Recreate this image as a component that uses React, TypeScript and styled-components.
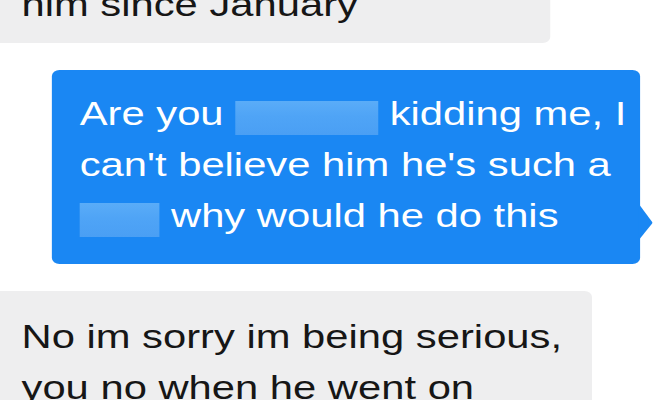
import React from 'react';
import styled, { createGlobalStyle, css } from 'styled-components';

// the reference screenshot is stretched sideways, so the thread is laid out
// at phone proportions and widened as a whole
const stretch = 1.265;

const GlobalStyle = createGlobalStyle`
  html, body {
    margin: 0;
    padding: 0;
    background: #ffffff;
    overflow: hidden;
  }
  body {
    font-family: "Liberation Sans", Arial, Helvetica, sans-serif;
  }
`;

const Screen = styled.div`
  width: ${670 / stretch}px;
  height: 400px;
  overflow: hidden;
  transform: scaleX(${stretch});
  transform-origin: 0 0;
`;

const Thread = styled.div`
  display: flex;
  flex-direction: column;
  align-items: flex-start;
  gap: 27px;
  margin-top: -41px;
`;

type Side = 'in' | 'out';

const Bubble = styled.div<{ $side: Side; $width: number; $offset: number }>`
  position: relative;
  box-sizing: border-box;
  width: ${p => p.$width}px;
  margin-left: ${p => p.$offset}px;
  border-radius: 6px;
  font-size: 33px;
  line-height: 51px;
  white-space: nowrap;

  ${p =>
    p.$side === 'in'
      ? css`
          background: #eeeeef;
          color: #161616;
          padding: 20px 0 13px 27px;
        `
      : css`
          background: #1a87f3;
          color: #ffffff;
          padding: 18px 0 23px 22px;

          &::after {
            content: '';
            position: absolute;
            right: -10px;
            bottom: 24px;
            width: 11px;
            height: 36px;
            background: #1a87f3;
            clip-path: polygon(0 0, 100% 52%, 0 100%);
          }
        `}
`;

const Line = styled.div`
  display: block;
`;

const Censor = styled.span<{ $width: number }>`
  display: inline-block;
  width: ${p => p.$width}px;
  height: 34px;
  vertical-align: -10px;
  background: linear-gradient(180deg, #5aacf8 0%, #4fa4f6 45%, #4a9ff4 100%);
`;

export default function App() {
  return (
    <>
      <GlobalStyle />
      <Screen>
        <Thread>
          <Bubble $side="in" $width={445} $offset={-10}>
            <Line>him since January</Line>
          </Bubble>

          <Bubble $side="out" $width={465} $offset={41}>
            <Line>
              Are you <Censor $width={113} /> kidding me, I
            </Line>
            <Line>can't believe him he's such a</Line>
            <Line>
              <Censor $width={63} /> why would he do this
            </Line>
          </Bubble>

          <Bubble $side="in" $width={478} $offset={-10}>
            <Line>No im sorry im being serious,</Line>
            <Line>you no when he went on</Line>
          </Bubble>
        </Thread>
      </Screen>
    </>
  );
}
